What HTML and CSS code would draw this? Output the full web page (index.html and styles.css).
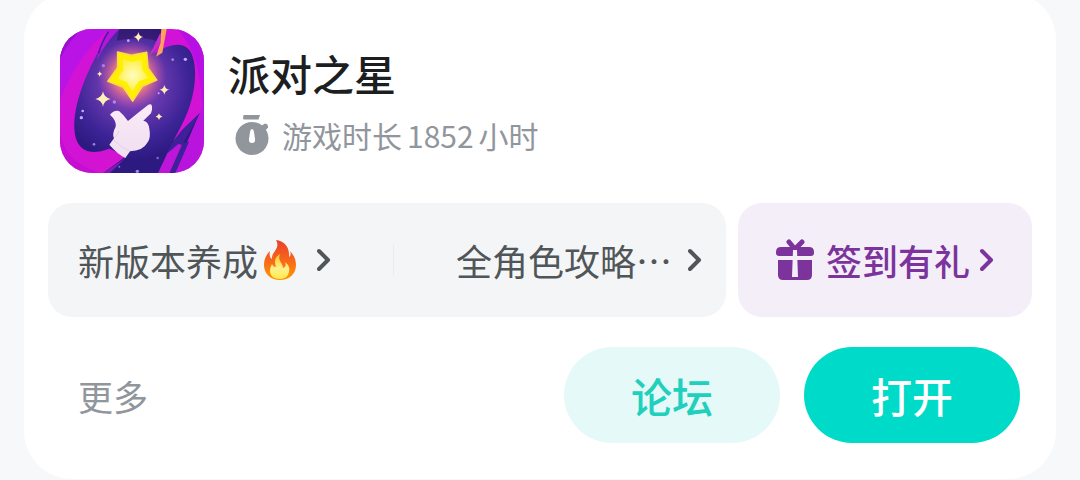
FILE: index.html
```html
<!DOCTYPE html>
<html lang="zh-CN">
<head>
    <meta charset="UTF-8">
    <meta name="viewport" content="width=device-width, initial-scale=1.0">
    <title>派对之星</title>
    <link rel="stylesheet" href="styles.css">
</head>
<body>
    <main class="game-card">
        <header class="game-header">
            <svg class="game-icon" viewBox="30 27 432 432" aria-hidden="true">
                <defs>
                    <radialGradient id="night" gradientUnits="userSpaceOnUse" cx="245" cy="190" r="230">
                        <stop offset="0" stop-color="#a04cc0"/>
                        <stop offset="0.4" stop-color="#6838ae"/>
                        <stop offset="0.75" stop-color="#3c2496"/>
                        <stop offset="1" stop-color="#2c1a80"/>
                    </radialGradient>
                    <radialGradient id="glow">
                        <stop offset="0.45" stop-color="#ff8a70" stop-opacity="0.9"/>
                        <stop offset="1" stop-color="#c050b0" stop-opacity="0"/>
                    </radialGradient>
                    <radialGradient id="starFill">
                        <stop offset="0" stop-color="#fffcc0"/>
                        <stop offset="1" stop-color="#fff04a"/>
                    </radialGradient>
                    <linearGradient id="hand" x1="0" y1="0" x2="0" y2="1">
                        <stop offset="0" stop-color="#fbeaf6"/>
                        <stop offset="1" stop-color="#efdff0"/>
                    </linearGradient>
                    <path id="spark" d="M0-20Q3-3 20 0Q3 3 0 20Q-3 3-20 0Q-3-3 0-20Z"/>
                </defs>
                <rect x="30" y="27" width="432" height="432" fill="#d213d6"/>
                <path d="M30 27H180C120 70 65 150 30 240Z" fill="#b913e6"/>
                <path d="M30 27H95C70 50 48 80 30 118Z" fill="#9712c8"/>
                <path d="M30 340C45 410 90 440 150 459H30Z" fill="#c50fd0"/>
                <path d="M382 27H462V290C450 200 455 110 382 27Z" fill="#b80fe4"/>
                <path d="M180 27H336L312 102C350 75 392 62 416 88C445 122 438 205 418 262C402 307 382 340 370 363L449 280L372 459H146L226 408L178 386C140 400 102 402 85 372C58 322 78 225 132 120Z" fill="url(#night)"/>
                <path d="M180 27H209C185 50 160 80 140 123C148 86 160 54 180 27Z" fill="#b516dc"/>
                <path d="M175 35Q154 68 146 100" stroke="#4a1c9c" stroke-width="5" fill="none"/>
                <path d="M209 27H336L322 65C290 48 240 56 200 62Z" fill="#281058" opacity="0.55"/>
                <path d="M334 27H350L337 98L318 110L331 70Z" fill="#ffa25a"/>
                <path d="M331 38L299 105L311 96L331 70Z" fill="#c52bc8"/>
                <path d="M449 280L374 459H462V250Z" fill="#b914de"/>
                <path d="M450 278L398 328L370 363L350 400L375 382L396 372L360 459H376L417 365L400 368Z" fill="#3e2098"/>
                <path d="M352 400L385 372L396 374L359 459H324Z" fill="#bc16d8"/>
                <path d="M85 372C110 409 155 398 178 386L226 410L160 459H146C120 440 90 415 72 350Z" fill="#d214d2"/>
                <path d="M226 414L180 459H160Z" fill="#801ab8"/>
                <circle cx="245" cy="165" r="104" fill="url(#glow)"/>
                <path d="M203 96L244 106L290 97L294 144L320 180L277 199L248 243L220 202L174 184L203 143Z" fill="#fff000" stroke="#ffd84a" stroke-width="5" stroke-linejoin="round"/>
                <path d="M219 119L246 125L275 119L277 150L295 173L267 184L247 213L230 187L202 175L220 151Z" fill="url(#starFill)"/>
                <path d="M180 284Q192 269 207 273Q220 283 234 303Q267 276 294 255Q308 247 306 269L303 280L280 302Q295 304 298 326Q303 352 293 367Q279 393 240 394L226 414Q202 402 178 374L192 355Q185 342 197 320Q200 302 180 284Z" fill="url(#hand)"/>
                <path d="M207 333Q204 347 193 352M190 359Q211 381 239 393" stroke="#e2d0e8" stroke-width="3" fill="none"/>
                <g fill="#ffefb4">
                    <use href="#spark" transform="translate(159 237) scale(1.15)"/>
                    <use href="#spark" transform="translate(265 51) scale(0.75)"/>
                    <use href="#spark" transform="translate(343 209) scale(0.75)"/>
                    <use href="#spark" transform="translate(327 290) scale(0.5)"/>
                    <use href="#spark" transform="translate(149 162) scale(0.4)"/>
                </g>
                <g fill="#c8a8ff">
                    <circle cx="160" cy="137" r="5" opacity="0.6"/>
                    <circle cx="235" cy="62" r="4"/>
                    <circle cx="406" cy="118" r="5"/>
                    <circle cx="368" cy="119" r="4" opacity="0.7"/>
                    <circle cx="98" cy="273" r="4"/>
                    <circle cx="94" cy="293" r="5"/>
                    <circle cx="193" cy="246" r="5" opacity="0.7"/>
                    <circle cx="326" cy="220" r="3"/>
                    <circle cx="132" cy="373" r="4" opacity="0.7"/>
                    <circle cx="323" cy="414" r="4" opacity="0.5"/>
                    <circle cx="262" cy="454" r="5" opacity="0.8"/>
                    <circle cx="208" cy="440" r="3" opacity="0.6"/>
                </g>
            </svg>
            <div class="game-info">
                <h1 class="game-title">派对之星</h1>
                <p class="play-time">
                    <svg class="timer-icon" viewBox="0 0 36 42" aria-hidden="true">
                        <path d="M9.500 1H26L24.500 5.500H10.500Q9 5.500 9 4Z" fill="#90969c"/>
                        <circle cx="18" cy="24.500" r="16.500" fill="#90969c"/>
                        <path d="M27 12L31 9.500Q34.500 10 34 13.500L31 17Z" fill="#90969c"/>
                        <path d="M18 15Q19.500 15 20 18L21 25Q21.500 29 18 29Q14.500 29 15 25L16 18Q16.500 15 18 15Z" fill="#fff"/>
                    </svg>
                    <span>游戏时长<span class="hours">1852</span>小时</span>
                </p>
            </div>
        </header>

        <nav class="shortcuts">
            <div class="guide-panel">
                <a class="shortcut" href="#version">
                    <span>新版本养成</span>
                    <svg class="fire-icon" viewBox="0 0 34 42" role="img" aria-label="火">
                        <defs>
                            <linearGradient id="flame" x1="0" y1="0" x2="0" y2="1">
                                <stop offset="0" stop-color="#e8402c"/>
                                <stop offset="0.5" stop-color="#f8661c"/>
                                <stop offset="1" stop-color="#ff9800"/>
                            </linearGradient>
                            <linearGradient id="flameCore" x1="0" y1="0" x2="0" y2="1">
                                <stop offset="0" stop-color="#ffc928"/>
                                <stop offset="0.600" stop-color="#fff08c"/>
                                <stop offset="1" stop-color="#ffe94a"/>
                            </linearGradient>
                        </defs>
                        <path d="M13 1C21 2 27 8 26 18C28 17 28 14 27 12C31 16 33 21 33 26C33 35 26 41 17 41C8 41 1 35 1 26C1 19 4 15 7 12C6 16 7 19 9 20C8 13 18 10 13 1Z" fill="url(#flame)"/>
                        <path d="M17 15C14 21 20 24 20 29C23 28 23 25 22 23C26 26 27 29 26 33C25 38 21 40 17 40C11 40 7 37 7 32C7 29 8 27 9 25C10 27 11 28 13 28C11 22 12 18 17 15Z" fill="url(#flameCore)"/>
                    </svg>
                    <svg class="arrow" viewBox="0 0 14 24" aria-hidden="true"><path d="M2 3L11 12L2 21"/></svg>
                </a>
                <a class="shortcut shortcut-end" href="#roles">
                    <span>全角色攻略…</span>
                    <svg class="arrow" viewBox="0 0 14 24" aria-hidden="true"><path d="M2 3L11 12L2 21"/></svg>
                </a>
            </div>
            <a class="gift-panel" href="#gift">
                <svg class="gift-icon" viewBox="0 0 38 42" aria-hidden="true">
                    <path d="M13 3L18 9M26 3L20 9" stroke="#7c349c" stroke-width="5" stroke-linecap="round"/>
                    <path d="M5 8H33Q38 8 38 13V14Q38 17 35 17H3Q0 17 0 14V13Q0 8 5 8ZM2 21H36V36Q36 41 31 41H7Q2 41 2 36Z" fill="#7c349c"/>
                    <path d="M17 11H21L22 38H16Z" fill="#f4eef8"/>
                </svg>
                <span>签到有礼</span>
                <svg class="arrow" viewBox="0 0 14 24" aria-hidden="true"><path d="M2 3L11 12L2 21"/></svg>
            </a>
        </nav>

        <footer class="game-footer">
            <a class="more-link" href="#more">更多</a>
            <button class="btn btn-forum" type="button">论坛</button>
            <button class="btn btn-open" type="button">打开</button>
        </footer>
    </main>
</body>
</html>
```

FILE: styles.css
```css
* {
    box-sizing: border-box;
}

body {
    margin: 0;
    padding: 0 24px;
    overflow: hidden;
    background-color: #f6f8fa;
    font-family: "Noto Sans CJK SC", sans-serif;
}

a {
    color: inherit;
    text-decoration: none;
}

svg {
    display: block;
    flex: none;
}

/* the card runs a little past the top of the window */
.game-card {
    margin-top: -8px;
    padding: 37px 24px 36px;
    border-radius: 48px;
    background-color: #fff;
}

.game-header {
    display: flex;
    align-items: center;
    gap: 24px;
    padding: 0 12px;
}

.game-icon {
    width: 144px;
    height: 144px;
    border-radius: 32px;
}

.game-info {
    padding-bottom: 4px;
}

.game-title {
    margin: 0;
    color: #1c1e1f;
    font-size: 42px;
    font-weight: 500;
    line-height: 64px;
}

.play-time {
    display: flex;
    align-items: center;
    gap: 12px;
    margin: 8px 0 0;
    padding-left: 6px;
    color: #90969c;
    font-size: 30px;
    line-height: 44px;
}

.hours {
    margin: 0 5px;
}

.timer-icon {
    width: 36px;
    height: 42px;
}

.shortcuts {
    display: grid;
    grid-template-columns: 113fr 49fr;
    gap: 12px;
    margin: 30px 0;
    font-size: 36px;
    line-height: 54px;
    white-space: nowrap;
}

.guide-panel,
.gift-panel {
    display: flex;
    align-items: center;
    padding: 30px;
    border-radius: 24px;
}

.guide-panel {
    padding-right: 24px;
    background-color: #f4f5f7;
    color: #505558;
}

.shortcut {
    display: flex;
    align-items: center;
}

.shortcut-end {
    flex: 1;
    justify-content: flex-end;
    margin-left: 62px;
    background: linear-gradient(#e9ebed, #e9ebed) left center / 1px 32px no-repeat;
}

.fire-icon {
    width: 34px;
    height: 42px;
    margin-left: 5px;
}

.arrow {
    width: 14px;
    height: 24px;
    margin-left: 16px;
    fill: none;
    stroke: currentColor;
    stroke-width: 4;
    stroke-linecap: round;
    stroke-linejoin: round;
}

.fire-icon + .arrow {
    margin-left: 20px;
}

.gift-panel {
    justify-content: center;
    background-color: #f4eef8;
    color: #7c349c;
    font-weight: 500;
}

.gift-panel .arrow {
    margin-left: 10px;
}

.gift-icon {
    width: 38px;
    height: 42px;
    margin-right: 12px;
}

.game-footer {
    display: flex;
    align-items: center;
    gap: 24px;
    padding: 0 12px 0 30px;
}

.more-link {
    margin-right: auto;
    color: #90969c;
    font-size: 35px;
}

.btn {
    width: 216px;
    height: 96px;
    padding: 0;
    border: none;
    border-radius: 48px;
    font-family: inherit;
    font-size: 41px;
    font-weight: 500;
    cursor: pointer;
}

.btn-forum {
    background-color: #e4f9f8;
    color: #20d0bd;
}

.btn-open {
    background-color: #00dac8;
    color: #fff;
}
```
